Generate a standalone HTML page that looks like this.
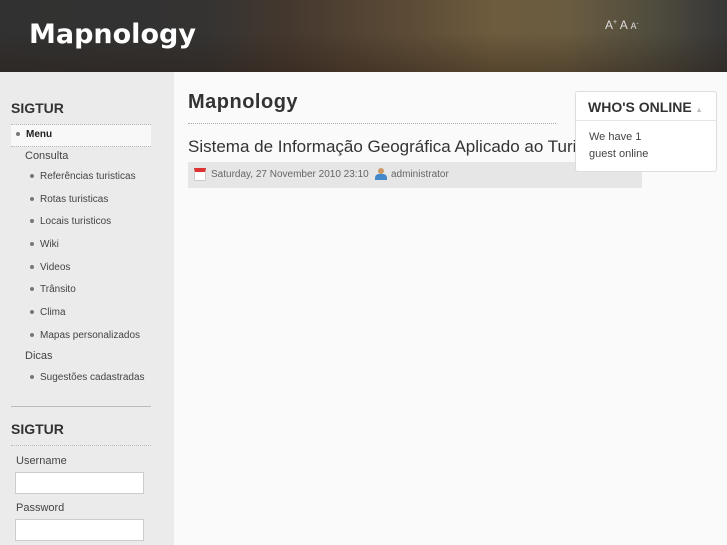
<!DOCTYPE html><html><head><style>
body{margin:0;width:727px;height:545px;overflow:hidden;background:#f7f7f7;font-family:"Liberation Sans",sans-serif;position:relative}
#hd{position:absolute;left:0;top:0;width:727px;height:72px;background:linear-gradient(90deg,#313131 0%,#343332 28%,#45382e 40%,#5a4a36 55%,#6e5c3e 68%,#6a5c40 78%,#4f4c3e 90%,#363636 100%)}
#hd:after{content:"";position:absolute;left:0;top:0;width:727px;height:72px;background:linear-gradient(180deg,rgba(0,0,0,0) 45%,rgba(40,25,15,.35) 100%)}
#logo{position:absolute;left:29px;top:19px;color:#fff;font:bold 27px "DejaVu Sans",sans-serif;z-index:2}
#fs{position:absolute;left:605px;top:18px;color:#ddd;font-size:12px;z-index:2}
#sb{position:absolute;left:0;top:72px;width:174px;height:473px;background:#ebebeb}
#main{position:absolute;left:174px;top:72px;width:553px;height:473px;background:#fafafa}
.h3{position:absolute;left:11px;font:bold 14px "Liberation Sans",sans-serif;color:#333}
.dot{position:absolute;left:11px;width:140px;border-top:1px dotted #bbb}
.it{position:absolute;font-size:10px;color:#444;white-space:nowrap}
.it.b:before{content:"";position:absolute;left:-10px;top:3px;width:4px;height:4px;border-radius:2px;background:#777}
input{position:absolute;left:15px;width:129px;height:22px;border:1px solid #ccc;background:#fff;box-sizing:border-box}
</style></head><body>
<div id="hd"><div id="logo">Mapnology</div><div id="fs">A<sup style="font-size:7px">+</sup> A <span style="font-size:9px">A<sup style="font-size:6px">-</sup></span></div></div>
<div id="sb">
<div class="h3" style="top:28px">SIGTUR</div>
<div class="dot" style="top:52px"></div>
<div style="position:absolute;left:11px;top:53px;width:140px;height:21px;background:#f8f8f8"></div>
<div class="dot" style="top:74px"></div>
<div class="it b" style="left:26px;top:57px;font-weight:bold;color:#222">Menu</div>
<div class="it" style="left:25px;top:78px;font-size:11px">Consulta</div>
<div class="it b" style="left:40px;top:99px">Referências turisticas</div>
<div class="it b" style="left:40px;top:122px">Rotas turisticas</div>
<div class="it b" style="left:40px;top:144px">Locais turisticos</div>
<div class="it b" style="left:40px;top:167px">Wiki</div>
<div class="it b" style="left:40px;top:190px">Videos</div>
<div class="it b" style="left:40px;top:212px">Trânsito</div>
<div class="it b" style="left:40px;top:235px">Clima</div>
<div class="it b" style="left:40px;top:258px">Mapas personalizados</div>
<div class="it" style="left:25px;top:278px;font-size:11px">Dicas</div>
<div class="it b" style="left:40px;top:300px">Sugestões cadastradas</div>
<div style="position:absolute;left:11px;top:334px;width:140px;border-top:1px solid #bbb"></div>
<div class="h3" style="top:349px">SIGTUR</div>
<div class="dot" style="top:373px"></div>
<div class="it" style="left:16px;top:383px;font-size:11px">Username</div>
<input style="top:400px">
<div class="it" style="left:16px;top:430px;font-size:11px">Password</div>
<input style="top:447px">
</div>
<div id="main">
<div style="position:absolute;left:14px;top:19px;font:bold 20px 'Liberation Sans',sans-serif;color:#333;letter-spacing:0.5px">Mapnology</div>
<div style="position:absolute;left:14px;top:51px;width:368px;border-top:1px dotted #aaa"></div>
<div style="position:absolute;left:14px;top:65px;font-size:17px;color:#333;width:400px;white-space:nowrap;overflow:hidden">Sistema de Informação Geográfica Aplicado ao Turismo</div>
<div style="position:absolute;left:14px;top:90px;width:454px;height:26px;background:#e6e6e6"></div>
<div style="position:absolute;left:20px;top:96px;width:12px;height:13px;background:#fff;border:1px solid #ccc;box-sizing:border-box;border-top:4px solid #d33"></div>
<div class="it" style="left:37px;top:97px;color:#666">Saturday, 27 November 2010 23:10</div>
<div style="position:absolute;left:201px;top:96px;width:12px;height:13px;"><div style="width:6px;height:6px;border-radius:3px;background:#c96;margin-left:3px"></div><div style="width:12px;height:6px;border-radius:4px 4px 0 0;background:#48c"></div></div>
<div class="it" style="left:217px;top:97px;color:#666">administrator</div>
<div style="position:absolute;left:401px;top:19px;width:140px;height:79px;background:#fff;border:1px solid #ddd;border-radius:3px">
<div style="position:absolute;left:12px;top:7px;font:bold 14px 'Liberation Sans',sans-serif;color:#333">WHO'S ONLINE <span style="font-size:7px;color:#bbb">▲</span></div>
<div style="position:absolute;left:0;top:28px;width:140px;border-top:1px solid #e5e5e5"></div>
<div class="it" style="left:13px;top:37px;line-height:17px;color:#444;font-size:11px">We have 1<br>guest online</div>
</div>
</div>
</body></html>
